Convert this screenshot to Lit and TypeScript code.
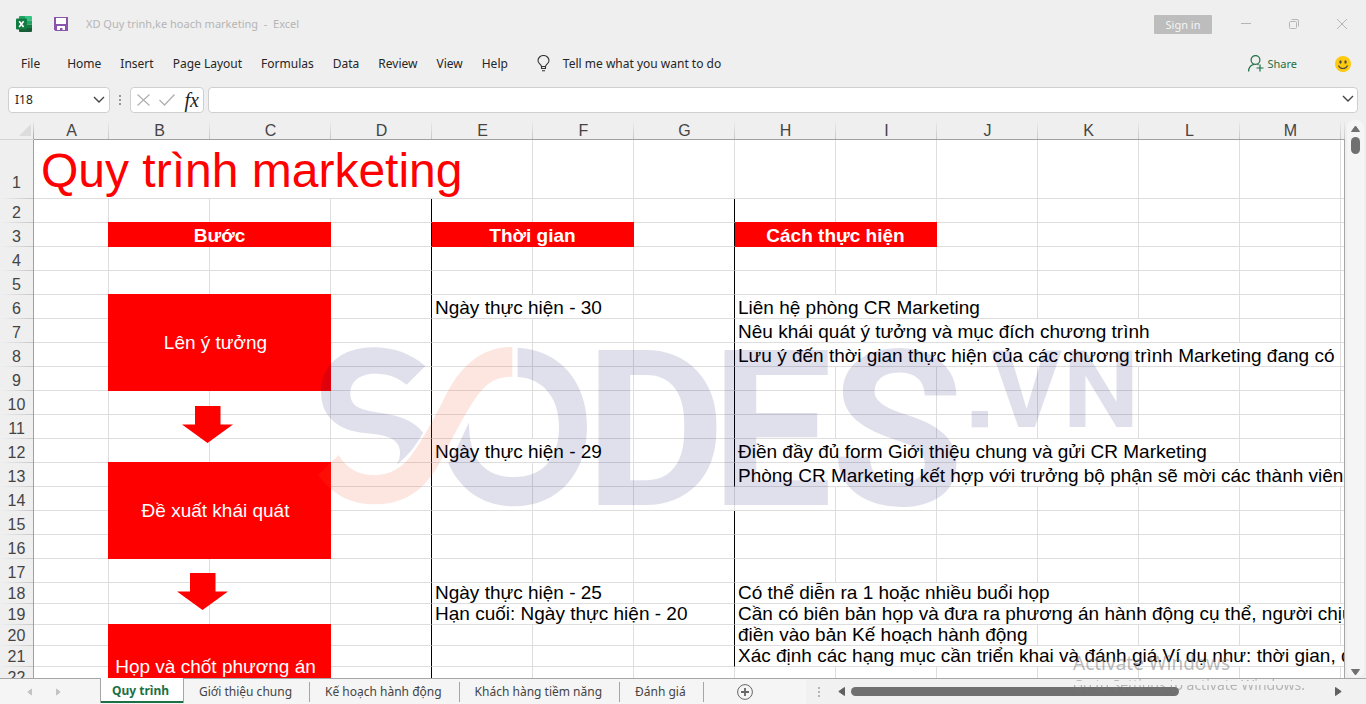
import { LitElement, html, css, svg, nothing } from "lit";
import { customElement } from "lit/decorators.js";
import { classMap } from "lit/directives/class-map.js";

interface Cell {
  col: string;
  span?: number;
  rows?: number;
  text?: string;
  kind?: string;
}

const COLUMNS = "ABCDEFGHIJKLM".split("").concat("");
const LAST_ROW = 22;

const CELLS: Record<number, Cell[]> = {
  1: [{ col: "A", span: 5, text: "Quy trình marketing", kind: "title" }],
  3: [
    { col: "B", span: 2, text: "Bước", kind: "head lap" },
    { col: "E", span: 2, text: "Thời gian", kind: "head" },
    { col: "H", span: 2, text: "Cách thực hiện", kind: "head" },
  ],
  6: [
    { col: "B", span: 2, rows: 4, text: "Lên ý tưởng", kind: "step lap" },
    { col: "E", span: 2, text: "Ngày thực hiện - 30" },
    { col: "H", span: 3, text: "Liên hệ phòng CR Marketing" },
  ],
  7: [{ col: "H", span: 5, text: "Nêu khái quát ý tưởng và mục đích chương trình" }],
  8: [{ col: "H", span: 6, text: "Lưu ý đến thời gian thực hiện của các chương trình Marketing đang có" }],
  12: [
    { col: "E", span: 2, text: "Ngày thực hiện - 29" },
    { col: "H", span: 5, text: "Điền đầy đủ form Giới thiệu chung và gửi CR Marketing" },
  ],
  13: [
    { col: "B", span: 2, rows: 4, text: "Đề xuất khái quát", kind: "step lap" },
    { col: "H", span: 7, text: "Phòng CR Marketing kết hợp với trưởng bộ phận sẽ mời các thành viên c" },
  ],
  18: [
    { col: "E", span: 2, text: "Ngày thực hiện - 25" },
    { col: "H", span: 4, text: "Có thể diễn ra 1 hoặc nhiều buổi họp" },
  ],
  19: [
    { col: "E", span: 3, text: "Hạn cuối: Ngày thực hiện - 20" },
    { col: "H", span: 7, text: "Cần có biên bản họp và đưa ra phương án hành động cụ thể, người chịu" },
  ],
  20: [
    { col: "B", span: 2, rows: 4, text: "Họp và chốt phương án", kind: "step lap" },
    { col: "H", span: 3, text: "điền vào bản Kế hoạch hành động" },
  ],
  21: [{ col: "H", span: 7, text: "Xác định các hạng mục cần triển khai và đánh giá.Ví dụ như: thời gian, địa" }],
};

const MENU = ["Home", "Insert", "Page Layout", "Formulas", "Data", "Review", "View", "Help"];
const TABS = ["Giới thiệu chung", "Kế hoạch hành động", "Khách hàng tiềm năng", "Đánh giá"];

const chevron = svg`<path d="M1 1l5 5 5-5" fill="none" stroke="#444" stroke-width="1.4"/>`;

@customElement("sheet-grid")
export class SheetGrid extends LitElement {
  static styles = css`
    :host {
      display: block;
      position: relative;
      overflow: hidden;
      font-family: "Liberation Sans", Arial, sans-serif;
    }
    :host::after {
      content: "";
      position: absolute;
      top: 19px;
      right: 0;
      bottom: 0;
      width: 1px;
      background: #a6a6a6;
    }
    table {
      table-layout: fixed;
      width: 100%;
      border-collapse: separate;
      border-spacing: 0;
      background: #fff;
    }
    .c-gutter { width: 34px; }
    .c-normal { width: 101px; }
    .c-A { width: 75px; }
    .c-C { width: 121px; }
    th, td {
      box-sizing: border-box;
      padding: 0;
      white-space: nowrap;
      font-weight: 400;
    }
    th {
      background: #efefef;
      color: #444;
      font-size: 16px;
      line-height: 20px;
      text-align: center;
      vertical-align: bottom;
    }
    thead th {
      height: 20px;
      line-height: 17px;
      border-bottom: 1px solid #a0a0a0;
      background: linear-gradient(#efefef, #c8c8c8) right / 1px 100% no-repeat #efefef;
    }
    thead .corner {
      border-bottom-color: #d4d4d4;
      background: linear-gradient(#efefef, #a6a6a6) right / 1px 100% no-repeat #efefef;
    }
    .corner svg { display: block; margin: 0 3px 3px auto; }
    tbody th {
      border-right: 1px solid #a0a0a0;
      background: linear-gradient(90deg, #efefef, #c8c8c8) bottom / 100% 1px no-repeat #efefef;
    }
    td {
      border-right: 1px solid #dedede;
      border-bottom: 1px solid #dedede;
      font-size: 19px;
      line-height: 20px;
      color: #000;
      vertical-align: bottom;
    }
    td.text { padding-left: 3px; }
    tr.r-title { height: 59px; }
    tr.r-title th { padding-bottom: 6px; }
    tr.r-tall { height: 24px; }
    tr.r-short { height: 21px; }
    td.title {
      padding-left: 7px;
      font-size: 48px;
      line-height: 54px;
      color: #f00;
    }
    td.head, td.step {
      position: relative;
      background: #f00;
      border-color: #f00;
      color: #fff;
      text-align: center;
      padding-left: 0;
      box-shadow: 0 -1px 0 #f00;
    }
    td.head { font-weight: 700; }
    td.step { padding-right: 8px; vertical-align: middle; }
    td.lap { box-shadow: 0 -1px 0 #f00, -1px 0 0 #f00, -1px -1px 0 #f00; }
    td.rule { border-right-color: #000; }
    .arrow { position: absolute; }
    .arrow.first { left: 182px; top: 286px; }
    .arrow.second { left: 177px; top: 453px; }
    .brand {
      position: absolute;
      left: 310px;
      top: 215px;
      pointer-events: none;
    }
    .brand text { font-family: Roboto, sans-serif; font-weight: 700; }
  `;

  private ruled(end: number, row: number) {
    if (end === 3) return row >= 2;
    if (end === 6) return (row >= 2 && row <= 13) || (row >= 15 && row <= 21);
    return false;
  }

  private row(n: number) {
    const own = CELLS[n] ?? [];
    const out: unknown[] = [];
    let i = 0;
    while (i < COLUMNS.length) {
      const at = COLUMNS[i];
      const covered = (at === "B" || at === "C") &&
        [1, 2, 3].some((k) => (CELLS[n - k] ?? []).some((c) => c.rows));
      if (covered) {
        i += 1;
        continue;
      }
      const cell = own.find((c) => c.col === at);
      const span = cell?.span ?? 1;
      const kinds = Object.fromEntries((cell?.kind ?? "").split(" ").filter(Boolean).map((k) => [k, true]));
      out.push(html`<td
        class=${classMap({ text: !!cell, rule: this.ruled(i + span - 1, n), ...kinds })}
        colspan=${span}
        rowspan=${cell?.rows ?? 1}
      >${cell?.text ?? nothing}</td>`);
      i += span;
    }
    return html`<tr class=${this.rowSize(n)}><th scope="row">${n}</th>${out}</tr>`;
  }

  private rowSize(n: number) {
    return n === 1 ? "r-title" : n < 18 ? "r-tall" : "r-short";
  }

  private colSize(c: string) {
    if (c === "") return "";
    return c === "A" || c === "C" ? `c-${c}` : "c-normal";
  }

  private arrow(place: string) {
    return html`<svg class="arrow ${place}" width="51" height="37" viewBox="0 0 51 37" aria-hidden="true">
      <path d="M13 0h25.500v18.500H51L25.500 37 0 18.500h13z" fill="#f00" />
    </svg>`;
  }

  render() {
    return html`
      <table>
        <colgroup>
          <col class="c-gutter" />
          ${COLUMNS.map((c) => html`<col class=${this.colSize(c)} />`)}
        </colgroup>
        <thead>
          <tr>
            <th class="corner">
              <svg width="12" height="12" viewBox="0 0 12 12"><path d="M12 0v12H0z" fill="#dcdcdc" /></svg>
            </th>
            ${COLUMNS.map((c) => html`<th scope="col">${c}</th>`)}
          </tr>
        </thead>
        <tbody>
          ${Array.from({ length: LAST_ROW }, (_, k) => this.row(k + 1))}
          <tr class="r-short"><th></th><td></td>${COLUMNS.slice(3).map((_, k) => html`<td class=${classMap({ rule: k === 0 })}></td>`)}</tr>
        </tbody>
      </table>
      ${this.arrow("first")} ${this.arrow("second")}
      <svg class="brand" width="830" height="185" viewBox="0 0 2490 555">
        <g fill="rgb(0,0,100)" fill-opacity="0.12">
          <path d="M346 93C302 55 250 37 190 37 90 37 33 95 33 170c0 72 46 117 140 125 65 6 97 20 97 58 0 14-3 25-11 36 31-23 59-56 80-96-29-38-69-50-124-59-65-8-94-19-94-59 0-36 29-59 74-59 40 0 67 11 95 33z" />
          <path d="M623 38C750 45 831 140 831 275c0 135-81 239-221 239-90 0-160-49-195-129 25-40 43-83 62-123 0 108 43 164 133 164s137-56 137-151c0-85-47-145-124-149z" />
          <text x="824" y="510" font-size="650">D</text>
          <text x="1202" y="510" font-size="650">E</text>
          <text x="1562" y="510" font-size="650">S</text>
          <rect x="1985" y="228" width="49" height="49" />
          <text x="2044" y="277" font-size="325">V</text>
          <text x="2258" y="277" font-size="325">N</text>
        </g>
        <path fill="rgb(240,90,40)" fill-opacity="0.15" d="M607 36c-87 0-152 49-202 149-35 70-60 115-90 160-35 55-75 75-125 75-45 0-80-20-104-60L24 420c46 60 96 88 171 88 85 0 140-38 185-108 30-55 60-120 100-185 40-65 70-90 127-90z" />
      </svg>
    `;
  }
}

@customElement("app-root")
export class AppRoot extends LitElement {
  static styles = css`
    :host {
      display: flex;
      flex-direction: column;
      position: relative;
      height: 100vh;
      overflow: hidden;
      background: #efefef;
      color: #262626;
      font-family: "Noto Sans", "Open Sans", sans-serif;
      font-size: 12px;
      line-height: 16px;
    }
    button, input {
      font: inherit;
      color: inherit;
      border: 0;
      padding: 0;
      margin: 0;
      background: none;
      min-width: 0;
    }
    svg { display: block; flex: none; }
    .titlebar { display: flex; align-items: center; height: 48px; padding: 0 19px 0 16px; }
    .save { margin-left: 22px; }
    .doc { margin-left: 18px; color: #b5b5b5; font-size: 11px; white-space: pre; }
    .push { margin-left: auto; }
    .signin { width: 58px; height: 19px; background: #bdbdbd; color: #f5f5f5; line-height: 19px; font-size: 11px; border-radius: 1px; }
    .win { display: flex; margin-left: 29px; gap: 38px; }
    .menubar { display: flex; align-items: center; height: 31px; padding: 0 15px 0 21px; }
    .menu { display: flex; gap: 19px; margin-left: 27px; }
    .tell { display: flex; align-items: center; gap: 13px; margin-left: 29px; }
    .share { display: flex; align-items: center; gap: 3px; color: #1d7044; font-size: 11px; }
    .smile { margin-left: 38px; }
    .formula { display: flex; align-items: center; height: 26px; margin: 8px 8px 7px; }
    .box {
      display: flex;
      align-items: center;
      box-sizing: border-box;
      height: 26px;
      border: 1px solid #cfcfcf;
      border-radius: 4px;
      background: #fff;
    }
    .namebox { width: 102px; padding: 0 4px 0 6px; }
    .namebox input { flex: 1; }
    .grip { margin: 0 9px; }
    .tools { width: 74px; padding: 0 4px 0 6px; justify-content: space-between; margin-right: 4px; }
    .fx { font: italic 400 20px/20px "Liberation Serif", serif; color: #222; }
    .entry { flex: 1; padding: 0 3px; }
    .entry input { flex: 1; }
    .work { display: flex; flex: 1; min-height: 0; }
    sheet-grid { flex: 1; min-width: 0; }
    .vscroll {
      display: flex;
      flex-direction: column;
      align-items: center;
      box-sizing: border-box;
      width: 17px;
      margin: 0 2px;
      padding: 5px 0 2px;
      border-radius: 8px;
      background: #f5f5f5;
    }
    .vthumb { width: 9px; height: 17px; border-radius: 5px; background: #707070; margin: 5px 0 auto; }
    .tabbar {
      display: flex;
      align-items: stretch;
      height: 25px;
      border-top: 1px solid #a6a6a6;
      background: #f5f5f5;
      color: #444;
    }
    .nav { display: flex; align-items: center; gap: 24px; width: 73px; padding-left: 27px; }
    .active {
      box-sizing: border-box;
      height: 25px;
      margin-top: -1px;
      padding: 1px 14px 0 11px;
      background: #fff;
      border: solid #a6a6a6;
      border-width: 0 1px;
      box-shadow: inset 0 -2px 0 #1d7044;
      color: #1d7044;
      font-weight: 700;
    }
    .tab { height: 20px; margin-top: 3px; padding: 0 17px 0 15px; border-right: 1px solid #a6a6a6; }
    .add { margin: 0 auto 0 33px; }
    .hscroll {
      display: flex;
      align-items: center;
      box-sizing: border-box;
      width: 41%;
      padding: 0 24px 0 12px;
      background: #f1f1f1;
    }
    .hbar { display: flex; align-items: center; flex: 1; margin-left: 18px; }
    .hthumb { width: 65%; height: 9px; margin: 0 auto 0 6px; border-radius: 5px; background: #707070; }
    .notice {
      position: absolute;
      right: 56px;
      bottom: 9px;
      width: 237px;
      color: rgba(120, 120, 120, 0.5);
      white-space: nowrap;
      pointer-events: none;
    }
    .notice-head { font-size: 19px; line-height: 24px; }
    .notice-body {
      font-size: 14px;
      line-height: 20px;
      -webkit-mask-image: linear-gradient(#000 6px, transparent 6px, transparent 10px, #000 10px, #000 15px, transparent 15px);
      mask-image: linear-gradient(#000 6px, transparent 6px, transparent 10px, #000 10px, #000 15px, transparent 15px);
    }
  `;

  private tri(points: string, w: number, h: number, fill: string) {
    return html`<svg width=${w} height=${h} viewBox="0 0 ${w} ${h}"><path d=${points} fill=${fill} stroke=${fill} stroke-linejoin="round" /></svg>`;
  }

  render() {
    return html`
      <header class="titlebar">
        <svg width="16" height="16" viewBox="0 0 16 16">
          <path d="M3 1h6.500v7H3z" fill="#21a366" /><path d="M9.500 0H15a1 1 0 0 1 1 1v3.500H9.500z" fill="#33c481" />
          <path d="M3 1a1 1 0 0 1 1-1h5.500v4.500H3z" fill="#21a366" /><path d="M3 4.500h6.500V8H3z" fill="#107c41" />
          <path d="M9.500 4.500H16V8.500H9.500z" fill="#21a366" /><path d="M9.500 8.500H16V12H9.500z" fill="#107c41" />
          <path d="M3 8h6.500v4H16v3a1 1 0 0 1-1 1H4a1 1 0 0 1-1-1z" fill="#185c37" />
          <rect y="2.500" width="11" height="11" rx="1" fill="#107c41" />
          <path d="M3.200 5.200l4.400 5.800M7.600 5.200L3.200 11" stroke="#fff" stroke-width="1.600" />
        </svg>
        <button class="save" aria-label="Save">
          <svg width="14" height="14" viewBox="0 0 14 14">
            <path d="M0 0h14v14H1.500L0 12.500z" fill="#8a56ac" />
            <path d="M2 1h10v6H2zM3 9h8v4H8.500v-2H6v2H3z" fill="#fff" />
          </svg>
        </button>
        <span class="doc">XD Quy trinh,ke hoach marketing  -  Excel</span>
        <button class="signin push">Sign in</button>
        <div class="win">
          <button aria-label="Minimize"><svg width="10" height="10" viewBox="0 0 10 10"><path d="M0 4.500h10" stroke="#b5b5b5" /></svg></button>
          <button aria-label="Restore"><svg width="10" height="10" viewBox="0 0 10 10"><rect x=".5" y="2.500" width="7" height="7" rx="1" fill="none" stroke="#b5b5b5" /><path d="M2.500.500H8A1.500 1.500 0 0 1 9.500 2v5.500" fill="none" stroke="#b5b5b5" /></svg></button>
          <button aria-label="Close"><svg width="10" height="10" viewBox="0 0 10 10"><path d="M0 0l10 10M10 0L0 10" stroke="#b5b5b5" /></svg></button>
        </div>
      </header>

      <nav class="menubar">
        <button>File</button>
        <div class="menu">${MENU.map((m) => html`<button>${m}</button>`)}</div>
        <button class="tell">
          <svg width="13" height="17" viewBox="0 0 13 17" fill="none" stroke="#333">
            <path d="M4.500 11.500C4.500 9.500 1 8.500 1 5.700a5.500 5.200 0 0 1 11 0c0 2.800-3.500 3.800-3.500 5.800v2h-4zM4.500 11.500h4M5 15.800h3" stroke-width="1.100" />
          </svg>
          Tell me what you want to do
        </button>
        <button class="share push">
          <svg width="16" height="17" viewBox="0 0 16 17" fill="none" stroke="#1d7044" stroke-width="1.200">
            <circle cx="7.500" cy="5" r="4.400" /><path d="M.600 16.500c0-4 2.400-6.500 5.400-7.200M9.500 9.300l1 .700M12 9.500v7M8.500 13h7" />
          </svg>
          Share
        </button>
        <button class="smile" aria-label="Feedback">
          <svg width="16" height="16" viewBox="0 0 16 16">
            <circle cx="8" cy="8" r="8" fill="#fdca0f" />
            <ellipse cx="5.500" cy="6" rx="1.200" ry="1.700" fill="#4c4a48" /><ellipse cx="10.500" cy="6" rx="1.200" ry="1.700" fill="#4c4a48" />
            <path d="M3.500 9.500c1.500 4 7.500 4 9 0" fill="none" stroke="#4c4a48" stroke-width="1.100" />
          </svg>
        </button>
      </nav>

      <div class="formula">
        <div class="box namebox">
          <input aria-label="Name box" value="I18" />
          <button aria-label="Open names"><svg width="12" height="8" viewBox="0 0 12 8">${chevron}</svg></button>
        </div>
        <svg class="grip" width="2" height="10" viewBox="0 0 2 10"><path d="M0 0h2v2H0zM0 4h2v2H0zM0 8h2v2H0z" fill="#999" /></svg>
        <div class="box tools">
          <button aria-label="Cancel"><svg width="13" height="12" viewBox="0 0 13 12"><path d="M.500.500l12 11M12.500.500l-12 11" stroke="#b0b0b0" stroke-width="1.200" /></svg></button>
          <button aria-label="Enter"><svg width="16" height="12" viewBox="0 0 16 12"><path d="M.500 6l5 5L15.500.500" fill="none" stroke="#b0b0b0" stroke-width="1.300" /></svg></button>
          <button class="fx" aria-label="Insert function">fx</button>
        </div>
        <div class="box entry">
          <input aria-label="Formula" />
          <button aria-label="Expand"><svg width="12" height="10" viewBox="0 0 12 10">${chevron}</svg></button>
        </div>
      </div>

      <main class="work">
        <sheet-grid></sheet-grid>
        <div class="vscroll">
          ${this.tri("M4.500 1L8.500 6.500H.500z", 9, 7, "#707070")}
          <div class="vthumb"></div>
          ${this.tri("M.500.500h8L4.500 6z", 9, 7, "#707070")}
        </div>
      </main>

      <footer class="tabbar">
        <div class="nav">
          ${this.tri("M4.500 1v6L.800 4z", 5, 8, "#c4c4c4")}
          ${this.tri("M.500 1v6L4.200 4z", 5, 8, "#c4c4c4")}
        </div>
        <button class="active">Quy trình</button>
        ${TABS.map((t) => html`<button class="tab">${t}</button>`)}
        <button class="add" aria-label="New sheet">
          <svg width="16" height="16" viewBox="0 0 16 16" fill="none" stroke="#666">
            <circle cx="8" cy="8" r="7.400" /><path d="M4 8h8M8 4v8" stroke-width="1.800" />
          </svg>
        </button>
        <div class="hscroll">
          <svg width="2" height="10" viewBox="0 0 2 10"><path d="M0 0h2v2H0zM0 4h2v2H0zM0 8h2v2H0z" fill="#b5b5b5" /></svg>
          <div class="hbar">
            ${this.tri("M6.500.500v8L.800 4.500z", 7, 9, "#606060")}
            <div class="hthumb"></div>
            ${this.tri("M.500.500v8l5.700-4z", 7, 9, "#606060")}
          </div>
        </div>
      </footer>

      <div class="notice">
        <div class="notice-head">Activate Windows</div>
        <div class="notice-body">Go to Settings to activate Windows.</div>
      </div>
    `;
  }
}
